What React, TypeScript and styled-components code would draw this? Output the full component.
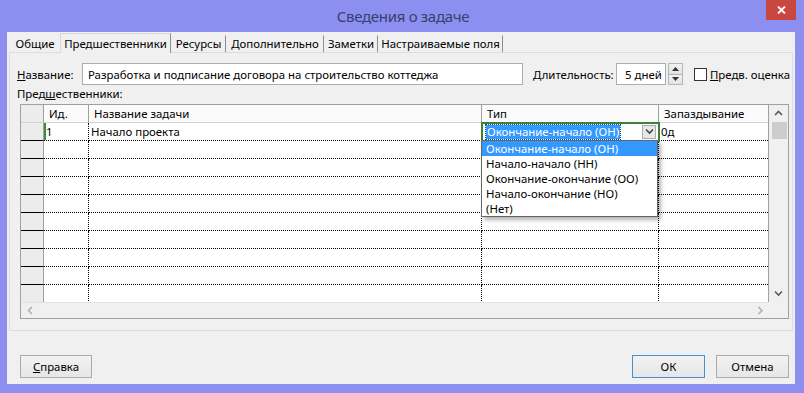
import React from "react";
import styled, { createGlobalStyle } from "styled-components";

const GlobalStyle = createGlobalStyle`
  html, body { margin: 0; padding: 0; }
  body {
    background: #8c8ff0;
    font-family: "Noto Sans", "Liberation Sans", sans-serif;
    font-size: 11.4px;
    color: #000;
  }
  * { box-sizing: border-box; }
`;

const Window = styled.div`
  width: 804px;
  height: 393px;
  background: #8c8ff0;
  display: flex;
  flex-direction: column;
  overflow: hidden;
`;

const TitleBar = styled.div`
  height: 32px;
  flex: none;
  display: grid;
  grid-template-columns: 1fr auto 1fr;
  align-items: center;
`;

const Title = styled.div`
  grid-column: 2;
  font-size: 15px;
  letter-spacing: -0.3px;
  color: #353f6e;
  line-height: 32px;
  padding-left: 2px;
`;

const CloseButton = styled.div`
  grid-column: 3;
  justify-self: end;
  align-self: start;
  width: 30px;
  height: 20px;
  margin-right: 8px;
  background: #c8483f;
  display: flex;
  align-items: center;
  justify-content: center;
`;

const Client = styled.div`
  flex: 1;
  margin: 0 9px 9px 7px;
  background: #f0f0f0;
  display: flex;
  flex-direction: column;
  padding: 1px 2px 6px 2px;
`;

const TabStrip = styled.div`
  display: flex;
  align-items: flex-end;
  height: 19px;
  padding-left: 1px;
  position: relative;
  z-index: 1;
`;

const Tab = styled.div<{ $w: number; $active?: boolean; $sep?: boolean }>`
  width: ${(p) => p.$w}px;
  height: ${(p) => (p.$active ? 20 : 17)}px;
  margin-bottom: ${(p) => (p.$active ? -1 : 0)}px;
  display: flex;
  align-items: center;
  justify-content: center;
  background: #f0f0f0;
  border-top: 1px solid ${(p) => (p.$active ? "#d9d9d9" : "transparent")};
  border-left: 1px solid ${(p) => (p.$active ? "#d9d9d9" : "transparent")};
  border-right: 1px solid ${(p) => (p.$sep ? "#8f8f8f" : "transparent")};
  white-space: nowrap;
  padding-bottom: 1px;
`;

const Panel = styled.div`
  height: 279px;
  border: 1px solid #dcdcdc;
  display: flex;
  flex-direction: column;
  padding: 10px 2px 0 7px;
`;

const FieldRow = styled.div`
  display: flex;
  align-items: center;
  height: 22px;
`;

const Label = styled.div<{ $w?: number; $ml?: number }>`
  width: ${(p) => (p.$w ? `${p.$w}px` : "auto")};
  margin-left: ${(p) => p.$ml ?? 0}px;
  white-space: nowrap;
  flex: none;
`;

const TextBox = styled.div<{ $w: number; $pl?: number }>`
  width: ${(p) => p.$w}px;
  height: 22px;
  border: 1px solid #abadb3;
  background: #fff;
  padding-left: ${(p) => p.$pl ?? 5}px;
  display: flex;
  align-items: center;
  white-space: nowrap;
  overflow: hidden;
  flex: none;
`;

const Spin = styled.div`
  width: 15px;
  height: 22px;
  margin-left: 2px;
  display: flex;
  flex-direction: column;
  flex: none;
`;

const SpinHalf = styled.div`
  flex: 1;
  border: 1px solid #b5b5b5;
  background: linear-gradient(#f2f2f2, #e2e2e2);
  display: flex;
  align-items: center;
  justify-content: center;
  & + & { border-top: none; }
`;

const CheckBox = styled.div`
  width: 13px;
  height: 13px;
  border: 1px solid #333;
  background: #fff;
  margin-left: 11px;
  flex: none;
`;

const SectionLabel = styled.div`
  height: 16px;
  line-height: 16px;
  margin-top: 1px;
`;

const GridFrame = styled.div`
  margin: 2px 0 0 3px;
  width: 769px;
  height: 215px;
  border: 1px solid #a0a0a0;
  display: grid;
  grid-template-columns: 1fr 20px;
  grid-template-rows: 1fr 16px;
  background: #fff;
`;

const Body = styled.div`
  overflow: hidden;
  display: flex;
  flex-direction: column;
`;

const COLS = "23px 45px 393px 177px 109px";

const HeaderRow = styled.div`
  display: grid;
  grid-template-columns: ${COLS};
  height: 18px;
  flex: none;
`;

const HeadCell = styled.div<{ $corner?: boolean }>`
  background: ${(p) => (p.$corner ? "#ececec" : "#fbfbfb")};
  border-right: 1px solid #a0a0a0;
  border-bottom: 1px solid #d2d2d2;
  padding-left: 5px;
  line-height: 17px;
  white-space: nowrap;
  &:last-child { border-right: none; }
`;

const Row = styled.div`
  display: grid;
  grid-template-columns: ${COLS};
  height: 18px;
  flex: none;
`;

const RowHead = styled.div`
  background: #ececec;
  border-right: 1px solid #a0a0a0;
  border-bottom: 1px solid #000;
`;

const Cell = styled.div<{ $active?: boolean }>`
  border-right: 1px dotted #000;
  border-bottom: 1px dotted #000;
  padding-left: 2px;
  line-height: 17px;
  white-space: nowrap;
  position: relative;
  box-shadow: ${(p) => (p.$active ? "inset 2px 0 0 #3f8a3f" : "none")};
  &:last-child { border-right: none; }
`;

const EditorCell = styled.div`
  border-right: 1px dotted #000;
  border-bottom: 1px dotted #000;
  position: relative;
  outline: 2px solid #3d7f3d;
  outline-offset: -1px;
  display: flex;
  align-items: center;
  padding: 0 2px 0 4px;
  z-index: 2;
`;

const Highlight = styled.span`
  background: #3399ff;
  color: #fff;
  line-height: 13px;
  height: 14px;
  padding: 0 1px;
  outline: 1px dotted #1a4d80;
  white-space: nowrap;
`;

const DropButton = styled.div`
  margin-left: auto;
  width: 14px;
  height: 14px;
  border: 1px solid #acacac;
  background: #e8e8e8;
  display: flex;
  align-items: center;
  justify-content: center;
`;

const DropList = styled.div`
  position: absolute;
  left: -1px;
  top: 17px;
  width: 177px;
  border: 1px solid #646464;
  background: #fff;
  box-shadow: 3px 3px 4px rgba(0, 0, 0, 0.3);
  z-index: 5;
`;

const DropItem = styled.div<{ $sel?: boolean }>`
  height: 15px;
  line-height: 15px;
  padding-left: 4px;
  background: ${(p) => (p.$sel ? "#3399ff" : "transparent")};
  color: ${(p) => (p.$sel ? "#fff" : "#000")};
  white-space: nowrap;
`;

const VScroll = styled.div`
  background: #f0f0f0;
  border-left: 1px solid #a0a0a0;
  display: flex;
  flex-direction: column;
`;

const ScrollArrow = styled.div<{ $h?: number }>`
  height: ${(p) => p.$h ?? 17}px;
  display: flex;
  align-items: center;
  justify-content: center;
  flex: none;
`;

const Thumb = styled.div`
  height: 17px;
  margin: 0 1px 0 3px;
  background: #cdcdcd;
  flex: none;
`;

const Track = styled.div`
  flex: 1;
`;

const HScroll = styled.div`
  background: #f0f0f0;
  border-top: 1px solid #e2e2e2;
  display: flex;
  align-items: center;
  justify-content: space-between;
  padding: 0 4px 0 6px;
`;

const Corner = styled.div`
  background: #f0f0f0;
`;

const Footer = styled.div`
  margin-top: auto;
  display: flex;
  align-items: center;
  padding: 0 4px 0 11px;
  gap: 11px;
`;

const Spacer = styled.div`
  flex: 1;
`;

const Button = styled.div<{ $default?: boolean; $w?: number }>`
  width: ${(p) => p.$w ?? 73}px;
  height: 23px;
  border: 1px solid ${(p) => (p.$default ? "#4a8fd0" : "#acacac")};
  background: linear-gradient(#f2f2f2, #e6e6e6);
  display: flex;
  align-items: center;
  justify-content: center;
`;

const U = styled.span`
  text-decoration: underline;
`;

const Chevron = ({ dir, color = "#5a5a5a" }: { dir: "up" | "down" | "left" | "right"; color?: string }) => {
  const pts: Record<string, string> = {
    up: "1,5 4.5,1.5 8,5",
    down: "1,1.5 4.5,5 8,1.5",
    left: "5,1 1.5,4.5 5,8",
    right: "1.5,1 5,4.5 1.5,8",
  };
  const vertical = dir === "up" || dir === "down";
  return (
    <svg width={vertical ? 9 : 7} height={vertical ? 7 : 9} viewBox={vertical ? "0 0 9 7" : "0 0 7 9"}>
      <polyline points={pts[dir]} fill="none" stroke={color} strokeWidth="1.6" />
    </svg>
  );
};

const Tri = ({ up }: { up?: boolean }) => (
  <svg width="7" height="4" viewBox="0 0 7 4">
    <polygon points={up ? "0,4 3.5,0 7,4" : "0,0 3.5,4 7,0"} fill="#333" />
  </svg>
);

const tabs = [
  { t: "Общие", w: 50, sep: false },
  { t: "Предшественники", w: 111, sep: true, active: true },
  { t: "Ресурсы", w: 55, sep: true },
  { t: "Дополнительно", w: 98, sep: true },
  { t: "Заметки", w: 54, sep: true },
  { t: "Настраиваемые поля", w: 125, sep: true },
];

const options = [
  "Окончание-начало (ОН)",
  "Начало-начало (НН)",
  "Окончание-окончание (ОО)",
  "Начало-окончание (НО)",
  "(Нет)",
];

export default function App() {
  const emptyRows = Array.from({ length: 9 });
  return (
    <>
      <GlobalStyle />
      <Window>
        <TitleBar>
          <Title>Сведения о задаче</Title>
          <CloseButton>
            <svg width="9" height="8" viewBox="0 0 9 8">
              <path d="M1 0.5 L8 7.5 M8 0.5 L1 7.5" stroke="#fff" strokeWidth="1.8" />
            </svg>
          </CloseButton>
        </TitleBar>
        <Client>
          <TabStrip>
            {tabs.map((t) => (
              <Tab key={t.t} $w={t.w} $active={t.active} $sep={t.sep}>
                {t.t}
              </Tab>
            ))}
          </TabStrip>
          <Panel>
            <FieldRow>
              <Label $w={65}>
                <U>Н</U>азвание:
              </Label>
              <TextBox $w={441}>Разработка и подписание договора на строительство коттеджа</TextBox>
              <Label $w={83} $ml={10}>
                <U>Д</U>лительность:
              </Label>
              <TextBox $w={50} $pl={8}>
                5 дней
              </TextBox>
              <Spin>
                <SpinHalf>
                  <Tri up />
                </SpinHalf>
                <SpinHalf>
                  <Tri />
                </SpinHalf>
              </Spin>
              <CheckBox />
              <Label $ml={3}>
                <U>П</U>редв. оценка
              </Label>
            </FieldRow>
            <SectionLabel>
              Пред<U>ш</U>ественники:
            </SectionLabel>
            <GridFrame>
              <Body>
                <HeaderRow>
                  <HeadCell $corner />
                  <HeadCell>Ид.</HeadCell>
                  <HeadCell>Название задачи</HeadCell>
                  <HeadCell>Тип</HeadCell>
                  <HeadCell>Запаздывание</HeadCell>
                </HeaderRow>
                <Row>
                  <RowHead />
                  <Cell $active>1</Cell>
                  <Cell>Начало проекта</Cell>
                  <EditorCell>
                    <Highlight>Окончание-начало (ОН)</Highlight>
                    <DropButton>
                      <Chevron dir="down" color="#444" />
                    </DropButton>
                    <DropList>
                      {options.map((o, i) => (
                        <DropItem key={o} $sel={i === 0}>
                          {o}
                        </DropItem>
                      ))}
                    </DropList>
                  </EditorCell>
                  <Cell>0д</Cell>
                </Row>
                {emptyRows.map((_, i) => (
                  <Row key={i}>
                    <RowHead />
                    <Cell />
                    <Cell />
                    <Cell />
                    <Cell />
                  </Row>
                ))}
              </Body>
              <VScroll>
                <ScrollArrow>
                  <Chevron dir="up" />
                </ScrollArrow>
                <Thumb />
                <Track />
                <ScrollArrow>
                  <Chevron dir="down" />
                </ScrollArrow>
              </VScroll>
              <HScroll>
                <Chevron dir="left" color="#b0b0b0" />
                <Chevron dir="right" color="#b0b0b0" />
              </HScroll>
              <Corner />
            </GridFrame>
          </Panel>
          <Footer>
            <Button $w={72}>
              <span>
                <U>С</U>правка
              </span>
            </Button>
            <Spacer />
            <Button $default>ОК</Button>
            <Button>Отмена</Button>
          </Footer>
        </Client>
      </Window>
    </>
  );
}
